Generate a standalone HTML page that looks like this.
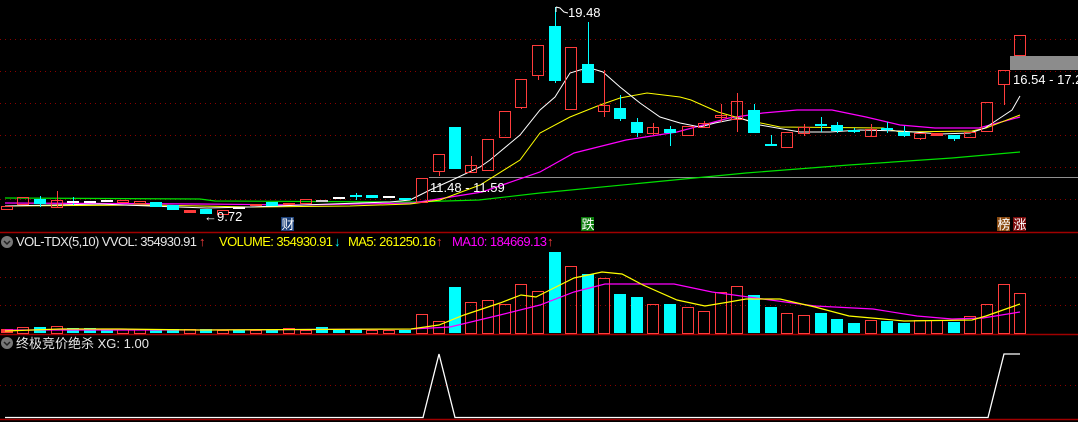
<!DOCTYPE html>
<html><head><meta charset="utf-8"><style>
html,body{margin:0;padding:0;background:#000;width:1078px;height:422px;overflow:hidden}
svg{display:block}
text{font-family:"Liberation Sans","Noto Sans CJK SC",sans-serif;font-size:13px}
.r{fill:none;stroke:#ff3c3c;stroke-width:1}
.rf{fill:#ff3c3c}
.c{fill:#00ffff}
.wr{stroke:#ff3c3c;stroke-width:1}
.wc{stroke:#00ffff;stroke-width:1}
.g{stroke:#8b0000;stroke-width:1;stroke-dasharray:1 4}
</style></head><body>
<svg width="1078" height="422" viewBox="0 0 1078 422" xmlns="http://www.w3.org/2000/svg">
<rect width="1078" height="422" fill="#000"/>
<!-- grid main -->
<g class="g">
<line x1="0" y1="39.5" x2="1078" y2="39.5"/><line x1="0" y1="71.5" x2="1078" y2="71.5"/>
<line x1="0" y1="103.5" x2="1078" y2="103.5"/><line x1="0" y1="135.5" x2="1078" y2="135.5"/>
<line x1="0" y1="167.5" x2="1078" y2="167.5"/><line x1="0" y1="199.5" x2="1078" y2="199.5"/>
<line x1="0" y1="277.5" x2="1078" y2="277.5"/><line x1="0" y1="305.5" x2="1078" y2="305.5"/>
<line x1="0" y1="385.5" x2="1078" y2="385.5"/>
</g>
<line x1="429" y1="177.5" x2="1078" y2="177.5" stroke="#909090"/>
<!-- MAs main -->
<polyline fill="none" stroke="#00e000" stroke-width="1.2" points="5,198 200,199 215,201 413,202 479,200 540,193 643,183 746,173 849,165 952,158 1020,152"/>
<polyline fill="none" stroke="#ff00ff" stroke-width="1.2" points="5,203 200,204 300,205 413,203 482,192 540,172 574,153 626,140 677,132 729,118 763,113 797,110 832,110 866,117 900,125 935,128 979,128 1020,117"/>
<polyline fill="none" stroke="#ffff00" stroke-width="1" points="5,206 150,205 250,207 350,206 410,204 440,200 480,185 520,160 540,133 570,117 600,105 620,98 647,93 680,97 691,100 718,112 746,120 780,127 883,128 900,132 972,131 986,128 1020,115"/>
<polyline fill="none" stroke="#ffffff" stroke-width="1" points="5,206 100,204 150,206 207,208 250,207 330,204 390,202 410,200 430,190 450,181 480,167 490,160 520,135 540,110 555,97 570,73 580,70 590,68 603,72 620,87 640,103 660,117 680,123 700,127 715,123 740,118 760,125 800,132 830,132 860,130 900,131 940,134 970,133 985,128 1000,118 1012,110 1020,96"/>
<!-- candles -->
<g>
<rect class="r" x="1.5" y="206.5" width="11" height="3"/>
<rect class="r" x="17.5" y="197.5" width="11" height="7"/>
<line class="wc" x1="40.5" y1="196" x2="40.5" y2="207"/><rect class="c" x="34" y="199" width="12" height="5"/>
<line class="wr" x1="57.5" y1="191" x2="57.5" y2="207"/><rect class="r" x="51.5" y="200.5" width="11" height="7"/>
<line class="wc" x1="73.5" y1="197" x2="73.5" y2="205"/><rect x="67" y="201" width="12" height="2" fill="#fff"/>
<rect x="84" y="201" width="12" height="2" fill="#fff"/>
<rect x="101" y="200" width="12" height="2" fill="#fff"/>
<rect class="r" x="117.5" y="200.5" width="11" height="2"/>
<rect class="r" x="134.5" y="201.5" width="11" height="2"/>
<rect class="c" x="150" y="202" width="12" height="5"/>
<rect class="c" x="167" y="205" width="12" height="5"/>
<rect class="rf" x="184" y="210" width="12" height="3"/>
<rect class="c" x="200" y="209" width="12" height="5"/>
<rect class="r" x="217.5" y="210.5" width="11" height="4"/>
<rect x="233" y="207" width="12" height="2" fill="#fff"/>
<rect class="rf" x="250" y="204" width="12" height="2"/>
<rect class="c" x="266" y="202" width="12" height="4"/>
<rect class="rf" x="283" y="203" width="12" height="2"/>
<rect class="r" x="300.5" y="199.5" width="11" height="4"/>
<rect x="316" y="200" width="12" height="2" fill="#ccc"/>
<rect x="333" y="197" width="12" height="2" fill="#fff"/>
<line class="wc" x1="356.5" y1="193" x2="356.5" y2="200"/><rect class="c" x="350" y="195" width="12" height="2"/>
<rect class="c" x="366" y="195" width="12" height="3"/>
<rect x="383" y="196" width="12" height="2" fill="#fff"/>
<rect class="c" x="399" y="198" width="12" height="2"/>
<rect class="r" x="416.5" y="178.5" width="11" height="24"/>
<line class="wr" x1="439.5" y1="171" x2="439.5" y2="176"/><rect class="r" x="433.5" y="154.5" width="11" height="17"/>
<rect class="c" x="449" y="127" width="12" height="42"/>
<line class="wr" x1="471.5" y1="156" x2="471.5" y2="173"/><rect class="r" x="465.5" y="165.5" width="11" height="7"/>
<rect class="r" x="482.5" y="139.5" width="11" height="31"/>
<rect class="r" x="499.5" y="111.5" width="11" height="26"/>
<line class="wr" x1="521.5" y1="107" x2="521.5" y2="109"/><rect class="r" x="515.5" y="79.5" width="11" height="28"/>
<line class="wr" x1="538.5" y1="75" x2="538.5" y2="80"/><rect class="r" x="532.5" y="45.5" width="11" height="30"/>
<line class="wc" x1="555.5" y1="7" x2="555.5" y2="83"/><rect class="c" x="549" y="26" width="12" height="55"/>
<rect class="r" x="565.5" y="47.5" width="11" height="62"/>
<line class="wc" x1="588.5" y1="22" x2="588.5" y2="83"/><rect class="c" x="582" y="64" width="12" height="19"/>
<line class="wr" x1="604.5" y1="70" x2="604.5" y2="117"/><rect class="r" x="598.5" y="105.5" width="11" height="6"/>
<line class="wc" x1="620.5" y1="95" x2="620.5" y2="121"/><rect class="c" x="614" y="108" width="12" height="11"/>
<line class="wc" x1="637.5" y1="118" x2="637.5" y2="137"/><rect class="c" x="631" y="122" width="12" height="11"/>
<line class="wr" x1="653.5" y1="123" x2="653.5" y2="135"/><rect class="r" x="647.5" y="127.5" width="11" height="6"/>
<line class="wc" x1="670.5" y1="126" x2="670.5" y2="146"/><rect class="c" x="664" y="129" width="12" height="4"/>
<rect class="r" x="682.5" y="126.5" width="11" height="9"/>
<line class="wr" x1="704.5" y1="121" x2="704.5" y2="127"/><rect class="r" x="698.5" y="123.5" width="11" height="4"/>
<line class="wr" x1="721.5" y1="104" x2="721.5" y2="122"/><rect class="r" x="715.5" y="115.5" width="11" height="2"/>
<line class="wr" x1="737.5" y1="93" x2="737.5" y2="132"/><rect class="r" x="731.5" y="101.5" width="11" height="18"/>
<line class="wc" x1="754.5" y1="104" x2="754.5" y2="133"/><rect class="c" x="748" y="110" width="12" height="23"/>
<line class="wc" x1="771.5" y1="135" x2="771.5" y2="146"/><rect class="c" x="765" y="144" width="12" height="2"/>
<rect class="r" x="781.5" y="132.5" width="11" height="15"/>
<line class="wr" x1="804.5" y1="124" x2="804.5" y2="136"/><rect class="r" x="798.5" y="127.5" width="11" height="6"/>
<line class="wc" x1="821.5" y1="117" x2="821.5" y2="132"/><rect class="c" x="815" y="124" width="12" height="2"/>
<line class="wc" x1="837.5" y1="122" x2="837.5" y2="133"/><rect class="c" x="831" y="125" width="12" height="6"/>
<line class="wc" x1="854.5" y1="128" x2="854.5" y2="133"/><rect class="c" x="848" y="130" width="12" height="2"/>
<line class="wr" x1="871.5" y1="124" x2="871.5" y2="136"/><rect class="r" x="865.5" y="129.5" width="11" height="7"/>
<line class="wc" x1="887.5" y1="122" x2="887.5" y2="133"/><rect class="c" x="881" y="128" width="12" height="2"/>
<line class="wc" x1="904.5" y1="126" x2="904.5" y2="137"/><rect class="c" x="898" y="132" width="12" height="4"/>
<line class="wr" x1="920.5" y1="138" x2="920.5" y2="140"/><rect class="r" x="914.5" y="133.5" width="11" height="5"/>
<rect class="rf" x="931" y="133" width="12" height="3"/>
<line class="wc" x1="954.5" y1="139" x2="954.5" y2="141"/><rect class="c" x="948" y="135" width="12" height="4"/>
<rect class="r" x="964.5" y="132.5" width="11" height="5"/>
<rect class="r" x="981.5" y="102.5" width="11" height="29"/>
<line class="wr" x1="1004.5" y1="84" x2="1004.5" y2="105"/><rect class="r" x="998.5" y="70.5" width="11" height="14"/>
<rect class="r" x="1014.5" y="35.5" width="11" height="20"/>
</g>
<rect x="1010" y="56" width="68" height="14" fill="#8c8c8c"/>
<text x="1013" y="84" fill="#fff" font-size="12">16.54 - 17.2</text>
<text x="568" y="17" fill="#fff" font-size="12">19.48</text>
<path d="M556 7 L556 12 M556 7 L560 8 L564 12 L568 13" fill="none" stroke="#fff" stroke-width="1"/>
<text x="430" y="192" fill="#fff" font-size="12">11.48 - 11.59</text>
<text x="204" y="221" fill="#fff" font-size="12">←9.72</text>
<rect x="281" y="217" width="13" height="14" fill="#1a3f78"/><text x="281.5" y="229" fill="#fff" font-size="12">财</text>
<rect x="581" y="217" width="13" height="14" fill="#0a7a0a"/><text x="581.5" y="229" fill="#fff" font-size="12">跌</text>
<rect x="997" y="217" width="13" height="14" fill="#8a4a10"/><text x="997.5" y="229" fill="#fff" font-size="12">榜</text>
<rect x="1013" y="217" width="13" height="14" fill="#7a0a0a"/><text x="1013.5" y="229" fill="#fff" font-size="12">涨</text>
<!-- separators -->
<line x1="0" y1="232.5" x2="1078" y2="232.5" stroke="#a00000" stroke-width="1.5"/>
<line x1="0" y1="334.5" x2="1078" y2="334.5" stroke="#a00000" stroke-width="1.5"/>
<line x1="0" y1="419.5" x2="1078" y2="419.5" stroke="#a00000" stroke-width="1.5"/>
<!-- volume labels -->
<circle cx="7" cy="242" r="6" fill="#777"/><path d="M4 241 L7 244 L10 241" fill="none" stroke="#222" stroke-width="1.5"/>
<text x="16" y="246" fill="#e8e8e8" textLength="181">VOL-TDX(5,10) VVOL: 354930.91</text>
<text x="199" y="246" fill="#ff3c3c">↑</text>
<text x="219" y="246" fill="#ffff00" textLength="114">VOLUME: 354930.91</text>
<text x="334" y="246" fill="#00ffff">↓</text>
<text x="348" y="246" fill="#ffff00" textLength="88">MA5: 261250.16</text>
<text x="436" y="246" fill="#ff3c3c">↑</text>
<text x="452" y="246" fill="#ff00ff" textLength="95">MA10: 184669.13</text>
<text x="547" y="246" fill="#ff3c3c">↑</text>
<!-- volume bars -->
<g>
<rect class="rf" x="1" y="329" width="12" height="4"/>
<rect class="r" x="17.5" y="327.5" width="11" height="6"/>
<rect class="c" x="34" y="327" width="12" height="6"/>
<rect class="r" x="51.5" y="326.5" width="11" height="7"/>
<rect class="c" x="67" y="328" width="12" height="5"/>
<rect class="c" x="84" y="328" width="12" height="5"/>
<rect class="c" x="101" y="329" width="12" height="4"/>
<rect class="r" x="117.5" y="329.5" width="11" height="4"/>
<rect class="r" x="134.5" y="329.5" width="11" height="4"/>
<rect class="c" x="150" y="329" width="12" height="4"/>
<rect class="c" x="167" y="329" width="12" height="4"/>
<rect class="r" x="184.5" y="329.5" width="11" height="4"/>
<rect class="c" x="200" y="329" width="12" height="4"/>
<rect class="r" x="217.5" y="330.5" width="11" height="3"/>
<rect class="c" x="233" y="330" width="12" height="3"/>
<rect class="r" x="250.5" y="330.5" width="11" height="3"/>
<rect class="c" x="266" y="330" width="12" height="3"/>
<rect class="r" x="283.5" y="328.5" width="11" height="5"/>
<rect class="r" x="300.5" y="330.5" width="11" height="3"/>
<rect class="c" x="316" y="327" width="12" height="6"/>
<rect class="c" x="333" y="329" width="12" height="4"/>
<rect class="c" x="350" y="329" width="12" height="4"/>
<rect class="r" x="366.5" y="330.5" width="11" height="3"/>
<rect class="r" x="383.5" y="330.5" width="11" height="3"/>
<rect class="c" x="399" y="330" width="12" height="3"/>
<rect class="r" x="416.5" y="314.5" width="11" height="19"/>
<rect class="r" x="433.5" y="321.5" width="11" height="12"/>
<rect class="c" x="449" y="287" width="12" height="46"/>
<rect class="r" x="465.5" y="302.5" width="11" height="31"/>
<rect class="r" x="482.5" y="300.5" width="11" height="33"/>
<rect class="r" x="499.5" y="304.5" width="11" height="29"/>
<rect class="r" x="515.5" y="284.5" width="11" height="49"/>
<rect class="r" x="532.5" y="291.5" width="11" height="42"/>
<rect class="c" x="549" y="252" width="12" height="81"/>
<rect class="r" x="565.5" y="266.5" width="11" height="67"/>
<rect class="c" x="582" y="274" width="12" height="59"/>
<rect class="r" x="598.5" y="278.5" width="11" height="55"/>
<rect class="c" x="614" y="294" width="12" height="39"/>
<rect class="c" x="631" y="297" width="12" height="36"/>
<rect class="r" x="647.5" y="304.5" width="11" height="29"/>
<rect class="c" x="664" y="304" width="12" height="29"/>
<rect class="r" x="682.5" y="307.5" width="11" height="26"/>
<rect class="r" x="698.5" y="311.5" width="11" height="22"/>
<rect class="r" x="715.5" y="292.5" width="11" height="41"/>
<rect class="r" x="731.5" y="286.5" width="11" height="47"/>
<rect class="c" x="748" y="295" width="12" height="38"/>
<rect class="c" x="765" y="307" width="12" height="26"/>
<rect class="r" x="781.5" y="313.5" width="11" height="20"/>
<rect class="r" x="798.5" y="315.5" width="11" height="18"/>
<rect class="c" x="815" y="313" width="12" height="20"/>
<rect class="c" x="831" y="319" width="12" height="14"/>
<rect class="c" x="848" y="323" width="12" height="10"/>
<rect class="r" x="865.5" y="320.5" width="11" height="13"/>
<rect class="c" x="881" y="321" width="12" height="12"/>
<rect class="c" x="898" y="323" width="12" height="10"/>
<rect class="r" x="914.5" y="320.5" width="11" height="13"/>
<rect class="r" x="931.5" y="320.5" width="11" height="13"/>
<rect class="c" x="948" y="322" width="12" height="11"/>
<rect class="r" x="964.5" y="316.5" width="11" height="17"/>
<rect class="r" x="981.5" y="304.5" width="11" height="29"/>
<rect class="r" x="998.5" y="284.5" width="11" height="49"/>
<rect class="r" x="1014.5" y="293.5" width="11" height="40"/>
</g>
<polyline fill="none" stroke="#ff00ff" stroke-width="1.2" points="5,330 200,330 411,329 450,327 500,315 540,305 574,292 605,284 674,284 712,292 763,299 815,306 873,309 917,316 952,319 983,318 1020,312"/>
<polyline fill="none" stroke="#ffff00" stroke-width="1.2" points="5,331 60,329 120,329 200,330 411,329 439,325 464,315 500,303 521,295 536,297 540,295 574,278 602,272 622,274 643,285 677,300 705,306 729,302 746,299 780,299 815,307 849,316 883,319 904,321 972,320 986,316 1020,304"/>
<!-- indicator -->
<circle cx="7" cy="343" r="6" fill="#777"/><path d="M4 342 L7 345 L10 342" fill="none" stroke="#222" stroke-width="1.5"/>
<text x="16" y="348" fill="#e8e8e8">终极竞价绝杀 XG: 1.00</text>
<polyline fill="none" stroke="#fff" stroke-width="1.3" points="5,417.5 423,417.5 439,354 455,417.5 988,417.5 1004,354 1020,354"/>
</svg>
</body></html>
